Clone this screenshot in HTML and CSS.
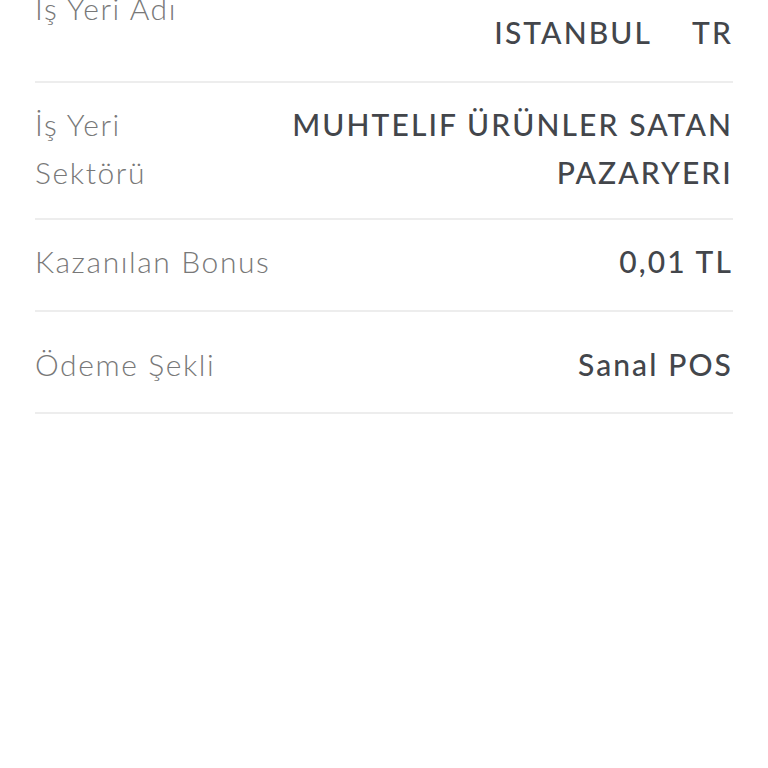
FILE: index.html
```html
<!DOCTYPE html>
<html lang="tr">
<head>
    <meta charset="UTF-8">
    <meta name="viewport" content="width=device-width, initial-scale=1.0">
    <title>İşlem Detayı</title>
    <link rel="stylesheet" href="styles.css">
</head>
<body>
    <div class="details">
        <div class="row row-first">
            <span class="label">İş Yeri Adı</span>
            <span class="value">
                <span class="value-line"></span>
                <span class="value-line">ISTANBUL<span class="country">TR</span></span>
            </span>
        </div>

        <div class="row">
            <span class="label">İş Yeri<br>Sektörü</span>
            <span class="value">MUHTELIF ÜRÜNLER SATAN<br>PAZARYERI</span>
        </div>

        <div class="row row-bonus">
            <span class="label">Kazanılan Bonus</span>
            <span class="value">0,01 TL</span>
        </div>

        <div class="row row-tall">
            <span class="label">Ödeme Şekli</span>
            <span class="value">Sanal POS</span>
        </div>
    </div>
</body>
</html>
```

FILE: styles.css
```css
* {
    margin: 0;
    padding: 0;
    box-sizing: border-box;
}

body {
    font-family: Lato, "Open Sans", sans-serif;
    background-color: #fff;
    color: #43464b;
    overflow: hidden;
}

.details {
    margin-top: -40px;
    padding: 0 35px;
}

.row {
    display: flex;
    justify-content: space-between;
    align-items: flex-start;
    gap: 24px;
    padding: 17px 0 22px;
    border-bottom: 2px solid #ededed;
    font-size: 30px;
    line-height: 48px;
}

.row-first {
    align-items: center;
    padding: 0 0 25px;
}

.row-bonus {
    padding-bottom: 25px;
}

.row-tall {
    padding-top: 28px;
    padding-bottom: 24px;
}

.label {
    color: #787878;
    font-weight: 300;
    letter-spacing: 1.6px;
}

.value {
    text-align: right;
    font-weight: 500;
    letter-spacing: 2.1px;
}

.value-line {
    display: block;
    min-height: 48px;
}

.country {
    margin-left: 40px;
}
```
